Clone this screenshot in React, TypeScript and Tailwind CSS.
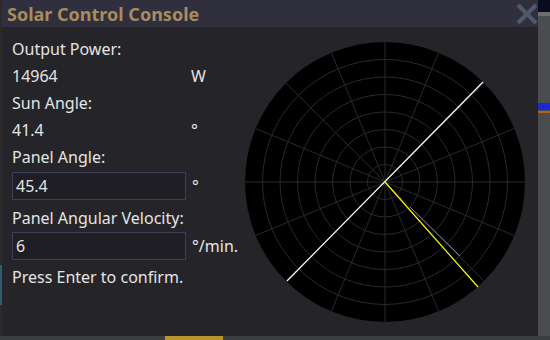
import React from "react";

const font = { fontFamily: '"Noto Sans", "Open Sans", sans-serif' };

function Polar() {
  const cx = 140;
  const cy = 140;
  const r = 140;
  const rings = [1, 2, 3, 4, 5, 6, 7].map((i) => (i * r) / 8);
  const spokes = Array.from({ length: 16 }, (_, i) => (i * Math.PI) / 8);

  return (
    <svg width="280" height="280" viewBox="0 0 280 280" className="shrink-0">
      <circle cx={cx} cy={cy} r={r} fill="#000" />
      {rings.map((rr) => (
        <circle key={rr} cx={cx} cy={cy} r={rr} fill="none" stroke="#2a2a2a" strokeWidth="1" />
      ))}
      {spokes.map((a) => (
        <line
          key={a}
          x1={cx}
          y1={cy}
          x2={cx + Math.cos(a) * r}
          y2={cy + Math.sin(a) * r}
          stroke="#2a2a2a"
          strokeWidth="1"
        />
      ))}
      {/* sun */}
      <line x1={42} y1={239} x2={238} y2={40} stroke="#fff" strokeWidth="1.2" />
      {/* panel */}
      <line x1={cx} y1={cy} x2={233} y2={245} stroke="#ffff00" strokeWidth="1.2" />
      <line x1={165} y1={165} x2={215} y2={214} stroke="#8a8a8a" strokeWidth="1" />
    </svg>
  );
}

export default function App() {
  return (
    <div className="relative h-[340px] w-[550px] overflow-hidden bg-[#2b2b2e]" style={font}>
      {/* game background bits */}
      <div className="absolute right-0 top-0 h-[12px] w-[12px] bg-[#0b0b1f]" />
      <div className="absolute right-0 top-[12px] h-[4px] w-[12px] bg-[#6e6e6e]" />
      <div className="absolute right-0 top-[16px] h-[320px] w-[12px] bg-[#4a4c4e]" />
      <div className="absolute right-0 top-[103px] h-[7px] w-[12px] bg-[#1a28d8]" />
      <div className="absolute right-0 top-[111px] h-[2px] w-[12px] bg-[#b0601a]" />
      <div className="absolute bottom-0 left-0 h-[4px] w-[550px] bg-[#3c3e40]" />
      <div className="absolute bottom-0 left-[165px] h-[4px] w-[58px] bg-[#b8952a]" />
      <div className="absolute left-0 top-[265px] h-[40px] w-[2px] bg-[#2f5a70]" />

      <div className="relative ml-[2px] flex h-[336px] w-[536px] flex-col bg-[#252529]">
        <div className="flex h-[27px] items-center justify-between bg-[#2f2f3d] pl-[5px]">
          <span className="text-[18px] font-bold leading-none text-[#a88b5e]">
            Solar Control Console
          </span>
          <svg width="22" height="22" viewBox="0 0 22 22" className="mt-[1px]">
            <path d="M2 2 L20 20 M20 2 L2 20" stroke="#4e5a6c" strokeWidth="4" />
          </svg>
        </div>

        <div className="flex pl-[10px] text-[16px] text-[#e4e4e4]">
          <div className="w-[233px] pt-[8px]">
            <div className="flex h-[27px] items-center">Output Power:</div>
            <div className="grid h-[27px] grid-cols-[179px_1fr] items-center">
              <span>14964</span>
              <span>W</span>
            </div>
            <div className="flex h-[27px] items-center">Sun Angle:</div>
            <div className="grid h-[27px] grid-cols-[179px_1fr] items-center">
              <span>41.4</span>
              <span>°</span>
            </div>
            <div className="flex h-[27px] items-center">Panel Angle:</div>
            <div className="mt-[2px] grid grid-cols-[180px_1fr] items-center">
              <div className="flex h-[28px] w-[174px] items-center border border-[#3b3e54] bg-[#1e1e24] pl-[3px]">
                45.4
              </div>
              <span>°</span>
            </div>
            <div className="mt-[4px] flex h-[27px] items-center">Panel Angular Velocity:</div>
            <div className="mt-[1px] grid grid-cols-[180px_1fr] items-center">
              <div className="flex h-[28px] w-[174px] items-center border border-[#3b3e54] bg-[#1e1e24] pl-[3px]">
                6
              </div>
              <span>°/min.</span>
            </div>
            <div className="mt-[3px] flex h-[27px] items-center">Press Enter to confirm.</div>
          </div>
          <div className="pt-[15px]">
            <Polar />
          </div>
        </div>
      </div>
    </div>
  );
}
